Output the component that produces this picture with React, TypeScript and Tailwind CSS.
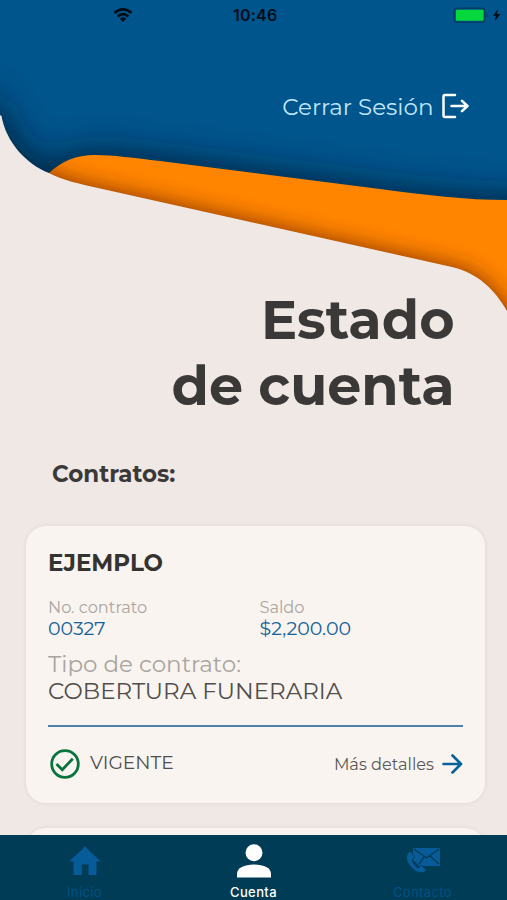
import React from "react";

function Waves() {
  return (
    <svg className="absolute inset-0 h-[330px] w-full" viewBox="0 0 507 330" preserveAspectRatio="none">
      <defs>
        <filter id="soft" x="-20%" y="-40%" width="140%" height="180%">
          <feGaussianBlur stdDeviation="18" />
        </filter>
        <filter id="softSmall" x="-20%" y="-40%" width="140%" height="180%">
          <feGaussianBlur stdDeviation="11" />
        </filter>
        <clipPath id="orangeClip">
          <path d="M30 190 L49 173 C62 161 76 155 95 155 C112 155 135 158 160 161 L380 189 C425 195 465 200 507 200 V330 H30Z" />
        </clipPath>
      </defs>
      <rect width="507" height="330" fill="#00558c" />
      <path d="M-30 90 L0 108 C8 136 25 158 49 169 C62 158 76 153 95 153 C112 153 135 156 160 159 L380 188 C425 194 465 199 560 199 V360 H-30Z" fill="#001c36" opacity="0.9" filter="url(#soft)" />
      <path d="M30 190 L49 173 C62 161 76 155 95 155 C112 155 135 158 160 161 L380 189 C425 195 465 200 507 200 V330 H30Z" fill="#ff8500" />
      <g clipPath="url(#orangeClip)">
        <path d="M-30 100 L0 116 C8 144 25 163 49 173 C62 180 80 184 98 188 L452 267 C478 273 495 290 507 311 L540 330 V360 H-30Z" fill="#7a2c00" opacity="0.95" filter="url(#softSmall)" />
      </g>
      <path d="M0 115 L1.5 116 C6 142 26 164 49 173 C62 180 80 184 98 188 L452 267 C478 273 495 290 507 311 V330 H0Z" fill="#efe8e5" />
    </svg>
  );
}

function StatusBar() {
  return (
    <div className="flex h-[30px] items-center font-['Inter',sans-serif] text-black">
      <svg className="ml-[113px] h-[14px] w-[20px]" viewBox="0 0 20 14">
        <g fill="none" stroke="#020d18" strokeWidth="2.7">
          <path d="M1.4 5.1 Q10 -2.3 18.6 5.1" />
          <path d="M4.6 8.5 Q10 3.9 15.4 8.5" />
        </g>
        <path d="M6.8 10.7 Q10 8 13.2 10.7 L10 14Z" fill="#020d18" />
      </svg>
      <span className="ml-[100px] w-[48px] whitespace-nowrap text-[16px] font-semibold leading-[30px] tracking-[0.2px] text-[#020d18]">10:46</span>
      <svg className="ml-[172px] h-[17px] w-[50px]" viewBox="0 0 50 17">
        <rect x="1.3" y="1.2" width="30.5" height="14" rx="3" fill="none" stroke="#063d66" strokeWidth="1.5" />
        <rect x="2.9" y="2.700" width="27.700" height="11" rx="1.2" fill="#05d83d" />
        <path d="M33.3 5.700 Q36.500 8.200 33.3 10.700Z" fill="#063d66" />
        <path d="M44.8 2 L40.2 8.700 H43 L42 14 L47.4 6.900 H44Z" fill="#020d18" />
      </svg>
    </div>
  );
}

function ContractCard() {
  return (
    <section className="ml-[25.5px] mr-[22px] h-[277px] rounded-[20px] bg-[#f9f4ef] pl-[22.5px] pr-[22px] pt-[22px] shadow-[0_0_4px_rgba(90,70,50,0.1)]">
      <h3 className="h-[30px] whitespace-nowrap text-[23px] font-bold leading-[30px] text-[#343332]">EJEMPLO</h3>
      <div className="mt-[18px] grid grid-cols-[211.5px_1fr]">
        <div>
          <div className="h-[22px] text-[16.2px] leading-[22px] text-[#a9a6a3]">No. contrato</div>
          <div className="h-[22px] text-[19px] leading-[22px] text-[#146299]">00327</div>
        </div>
        <div>
          <div className="h-[22px] text-[16.2px] leading-[22px] text-[#a9a6a3]">Saldo</div>
          <div className="h-[22px] text-[19px] leading-[22px] text-[#146299]">$2,200.00</div>
        </div>
      </div>
      <div className="mt-[10px] h-[28px] whitespace-nowrap text-[23px] leading-[28px] text-[#a8a5a0]">Tipo de contrato:</div>
      <div className="h-[28px] whitespace-nowrap text-[23px] leading-[27px] text-[#504e4c]">COBERTURA FUNERARIA</div>
      <div className="mt-[19px] h-[2px] bg-[#4a80aa]" />
      <div className="mt-[17px] flex h-[40px] items-center">
        <svg className="ml-[2px] h-[30px] w-[30px]" viewBox="0 0 30 30" fill="none" stroke="#08733f" strokeWidth="2.8">
          <circle cx="15" cy="15" r="13.3" />
          <path d="M6.5 15 L12.3 20.7 L22.8 9.7" />
        </svg>
        <span className="mb-[2px] ml-[10px] whitespace-nowrap text-[18.7px] text-[#504e4c]">VIGENTE</span>
        <span className="ml-auto mr-[8px] whitespace-nowrap text-[16.2px] text-[#5a5856]">Más detalles</span>
        <svg className="h-[20px] w-[21px]" viewBox="0 0 21 20" fill="none" stroke="#07639a" strokeWidth="2.7" strokeLinecap="round" strokeLinejoin="round">
          <path d="M1.5 10 H19 M10.5 1.5 L19 10 L10.5 18.5" />
        </svg>
      </div>
    </section>
  );
}

function TabBar() {
  return (
    <nav className="absolute inset-x-0 bottom-0 grid h-[65.5px] grid-cols-3 bg-[#003c55] font-['Inter',sans-serif] text-[13px] leading-[16px] tracking-[0.4px]">
      <div className="flex flex-col items-center pt-[11px] text-[#005286]">
        <svg className="h-[30px] w-[32px]" viewBox="0 0 32 30" fill="#075b98">
          <path d="M16 0 L20 4.500 L32 15.500 H27.500 V29 H19.500 V18.500 H12.800 V29 H4.500 V15.500 H0 L12 4.500Z" />
        </svg>
        <span className="mt-[8px]">Inicio</span>
      </div>
      <div className="flex flex-col items-center pt-[9px] font-medium text-white">
        <svg className="h-[34px] w-[34px]" viewBox="0 0 34 34" fill="white">
          <circle cx="17" cy="8.700" r="8.500" />
          <path d="M0 33.500 V30 C0 24 7 20.500 17 20.500 C27 20.500 34 24 34 30 V33.500Z" />
        </svg>
        <span className="mt-[6px]">Cuenta</span>
      </div>
      <div className="flex flex-col items-center pt-[13px] text-[#005286]">
        <svg className="h-[26px] w-[34px]" viewBox="0 0 34 26">
          <path d="M7 0 H34 V18 H13 L7 12Z" fill="#075b98" />
          <path d="M8 1 L20.500 10 L33 1 M13 16 L18 9 M33 16 L24 8" fill="none" stroke="#003c55" strokeWidth="1.300" />
          <path d="M4 3 C-2 8 0 14 6 20 C12 26 17 26 20.500 22 L15 17 L12 20 C9 18 7 15 6 12 L9 9Z" fill="#075b98" stroke="#003c55" strokeWidth="0.800" />
        </svg>
        <span className="mt-[10px]">Contacto</span>
      </div>
    </nav>
  );
}

export default function App() {
  return (
    <main className="relative h-[900px] w-full overflow-hidden bg-[#efe8e5] font-['Montserrat','Inter',sans-serif]">
      <Waves />
      <div className="relative">
        <StatusBar />
        <div className="mt-[61px] flex h-[30px] items-center justify-end pr-[38px]">
          <span className="mr-[8.5px] mt-[1px] whitespace-nowrap text-[23px] leading-[30px] text-[#c0e6fb]">Cerrar Sesión</span>
          <svg className="h-[26px] w-[27px]" viewBox="0 0 27 26" fill="none" stroke="white" strokeWidth="2.500" strokeLinecap="round" strokeLinejoin="round">
            <path d="M13 2 H3 Q1.500 2 1.500 3.500 V22.500 Q1.500 24 3 24 H13" />
            <path d="M9.500 13 H25.500 M20 7.800 L25.500 13 L20 18.200" />
          </svg>
        </div>
        <h1 className="mt-[166px] flex h-[132px] flex-col items-end pr-[52.5px] text-[54px] font-bold leading-[66px] text-[#3b3938]">
          <span>Estado</span>
          <span>de cuenta</span>
        </h1>
        <h2 className="ml-[52px] mt-[40px] h-[30px] text-[23px] font-bold leading-[30px] text-[#3b3938]">Contratos:</h2>
        <div className="mt-[37px] flex flex-col gap-[25px]">
          <ContractCard />
          <div className="ml-[25.5px] mr-[22px] h-[72px] rounded-t-[20px] bg-[#f9f4ef] shadow-[0_0_4px_rgba(90,70,50,0.1)]" />
        </div>
      </div>
      <TabBar />
    </main>
  );
}
